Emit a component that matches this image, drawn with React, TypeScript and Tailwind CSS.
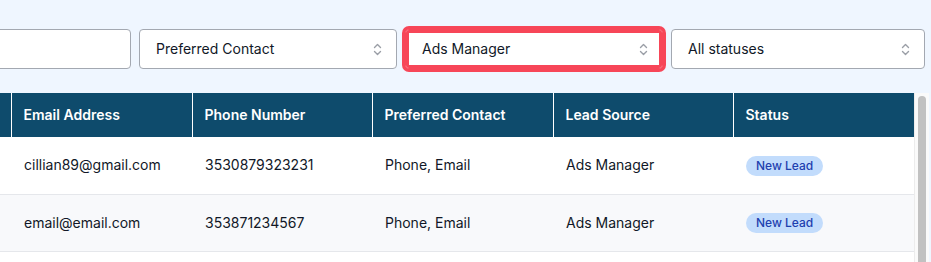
import React from "react";

interface Lead {
  email: string;
  phone: string;
  contact: string;
  source: string;
  status: string;
}

const leads: Lead[] = [
  { email: "cillian89@gmail.com", phone: "3530879323231", contact: "Phone, Email", source: "Ads Manager", status: "New Lead" },
  { email: "email@email.com", phone: "353871234567", contact: "Phone, Email", source: "Ads Manager", status: "New Lead" },
];

// first column is scrolled off to the left, only its border shows
const columns = ["", "Email Address", "Phone Number", "Preferred Contact", "Lead Source", "Status"];
const widths = ["w-[180px]", "w-[181px]", "w-[180px]", "w-[181px]", "w-[180px]", "w-[181px]"];

function UpDown() {
  return (
    <svg width="9" height="15" viewBox="0 0 9 15" fill="none" stroke="#9a9ea6" strokeWidth="1.4" strokeLinecap="round" strokeLinejoin="round">
      <path d="M1.5 5.5 L4.5 2.5 L7.5 5.5" />
      <path d="M1.5 9.5 L4.5 12.5 L7.5 9.5" />
    </svg>
  );
}

function FakeSelect({ label, width, highlight }: { label: string; width: string; highlight?: boolean }) {
  return (
    <div
      className={`${width} shrink-0 h-10 flex items-center justify-between pl-4 pr-[14px] bg-white border rounded text-sm text-[#111827] ${
        highlight ? "border-[#f74658] shadow-[0_0_0_3px_#f74658,inset_0_0_0_3px_#f74658]" : "border-[#a3a8b1]"
      }`}
    >
      <span>{label}</span>
      <UpDown />
    </div>
  );
}

export default function App() {
  return (
    <div className="h-[262px] w-[931px] overflow-hidden bg-[#eff6ff]" style={{ fontFamily: "Inter, 'Noto Sans', sans-serif" }}>
      <div className="-ml-[169px] w-[1100px] pt-[29px]">
        <div className="flex justify-end gap-2 pr-[6px]">
          <div className="w-[290px] shrink-0 h-10 bg-white border border-[#a3a8b1] rounded" />
          <FakeSelect label="Preferred Contact" width="w-[258px]" />
          <FakeSelect label="Ads Manager" width="w-[258px]" highlight />
          <FakeSelect label="All statuses" width="w-[254px]" />
        </div>

        <div className="mt-6 flex w-[1098px] h-[400px] overflow-hidden">
          <div className="w-[1083px] shrink-0 bg-white">
            <table className="w-full border-collapse table-fixed text-sm">
              <thead>
                <tr className="bg-[#0e4b6c] text-white h-11">
                  {columns.map((c, i) => (
                    <th key={i} className={`${widths[i]} text-left font-semibold px-3 ${i > 0 ? "border-l border-white" : ""}`}>
                      {c}
                    </th>
                  ))}
                </tr>
              </thead>
              <tbody>
                {leads.map((l, i) => (
                  <tr key={i} className={`h-[57px] border-b border-[#e5e7eb] ${i % 2 === 1 ? "bg-[#f8f9fb]" : "bg-white"} text-[#111827]`}>
                    <td className="px-3" />
                    <td className="pl-[13px] pr-3">{l.email}</td>
                    <td className="pl-[13px] pr-3">{l.phone}</td>
                    <td className="pl-[13px] pr-3">{l.contact}</td>
                    <td className="pl-[13px] pr-3">{l.source}</td>
                    <td className="pl-[13px] pr-3">
                      <span className="inline-flex items-center h-5 px-2.5 rounded-full bg-[#c2dcfc] text-[#1e40af] text-xs font-medium">
                        {l.status}
                      </span>
                    </td>
                  </tr>
                ))}
              </tbody>
            </table>
          </div>
          {/* scrollbar */}
          <div className="w-[15px] shrink-0 bg-[#fafafa] border-l border-[#ececec] pt-[3px] pl-[3px]">
            <div className="w-2 h-[320px] rounded-full bg-[#c1c1c1]" />
          </div>
        </div>
      </div>
    </div>
  );
}
